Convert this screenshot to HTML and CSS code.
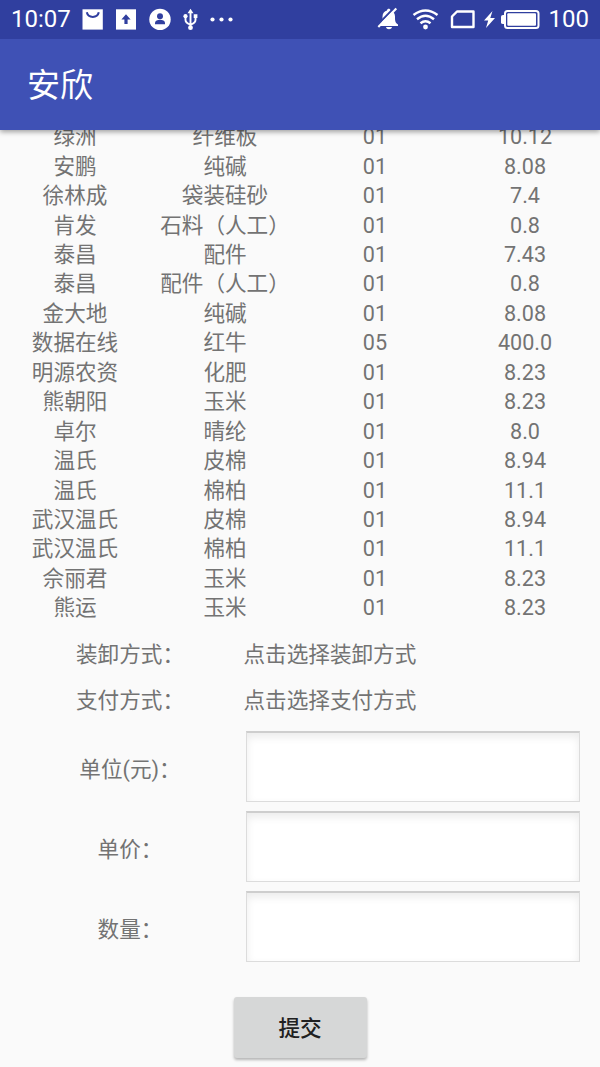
FILE: index.html
```
<!DOCTYPE html>
<html lang="zh-CN">
<head>
<meta charset="utf-8">
<title>安欣</title>
<link rel="stylesheet" href="styles.css">
</head>
<body>
<div class="screen">
  <header class="top">
    <div class="status">
      <span class="clock">10:07</span>
      <svg class="status-icons" width="154" height="38" viewBox="0 0 154 38">
        <path fill="#fff" d="M.5 8.300h20.300v20.300H.5z"/>
        <path d="M4.800 11.300c1.500 6.200 10.500 6.200 12 0" fill="none" stroke="#303f9f" stroke-width="2.100"/>
        <path fill="#fff" d="M34 8.300h20v20.300H34z"/>
        <path fill="#303f9f" d="M44 13.300l4.600 5.200H45.600v4.500h-3.200v-4.500h-3z"/>
        <circle cx="78" cy="18.400" r="10.700" fill="#fff"/>
        <circle cx="78" cy="15.200" r="3" fill="#303f9f"/>
        <path fill="#303f9f" d="M73 23.300v-1.500c0-4 10-4 10 0v1.500z"/>
        <g fill="none" stroke="#fff" stroke-width="1.900"><path d="M108.500 11v16M103.500 16v3q0 3 5 4.500M113.500 15v4q0 3-5 4.500"/></g>
        <path fill="#fff" d="M108.500 7.800l3 4.500h-6zM111.700 13.300h3.700v3.700h-3.700z"/>
        <circle cx="103.500" cy="15.200" r="2.100" fill="#fff"/><circle cx="108.500" cy="26.700" r="2.400" fill="#fff"/>
        <g fill="#fff"><circle cx="130.500" cy="18.500" r="2.100"/><circle cx="139.500" cy="18.500" r="2.100"/><circle cx="148.500" cy="18.500" r="2.100"/></g>
      </svg>
      <svg class="status-right" width="168" height="38" viewBox="0 0 168 38">
        <path fill="#fff" d="M3 23.500c2.500-2 2.500-4 2.500-8 0-3.500 2-5.500 4.500-6 0-2.500 3.500-2.500 3.500 0 3 .7 4.500 3 4.500 6 0 4 0 6 3 8V25H3zM9 26h6c-.5 3-5.500 3-6 0z"/>
        <path d="M-.2 24.700L18.300 5.700" stroke="#303f9f" stroke-width="2"/>
        <path d="M1.300 26L19.300 7.500" stroke="#fff" stroke-width="2.100"/>
        <g fill="none" stroke="#fff" stroke-width="2.500"><path d="M36.500 14q12-9 24 0M40 18.200q8.500-7 17 0M43.500 22.300q5-4 10 0"/></g>
        <circle cx="48.500" cy="26" r="2.400" fill="#fff"/>
        <path d="M80 10.500h16.500V26H75V15.500z" fill="none" stroke="#fff" stroke-width="2.400" stroke-linejoin="round"/>
        <path fill="#fff" d="M115.500 10l-8.500 9.500h4.200l-2.200 7.500 9-10h-4.700z"/>
        <path fill="#fff" d="M128 14h-2q-2 0-2 1.500v6q0 1.500 2 1.500h2z"/>
        <rect x="128" y="10" width="33.500" height="17" rx="2.500" fill="none" stroke="#fff" stroke-width="2"/>
        <rect x="130.300" y="12.300" width="28.700" height="12.400" rx="1" fill="#fff"/>
      </svg>
      <span class="percent">100</span>
    </div>
    <h1 class="title">安欣</h1>
  </header>
  <main>
    <div class="list">
      <span>绿洲</span><span>纤维板</span><span>01</span><span>10.12</span>
      <span>安鹏</span><span>纯碱</span><span>01</span><span>8.08</span>
      <span>徐林成</span><span>袋装硅砂</span><span>01</span><span>7.4</span>
      <span>肯发</span><span>石料（人工）</span><span>01</span><span>0.8</span>
      <span>泰昌</span><span>配件</span><span>01</span><span>7.43</span>
      <span>泰昌</span><span>配件（人工）</span><span>01</span><span>0.8</span>
      <span>金大地</span><span>纯碱</span><span>01</span><span>8.08</span>
      <span>数据在线</span><span>红牛</span><span>05</span><span>400.0</span>
      <span>明源农资</span><span>化肥</span><span>01</span><span>8.23</span>
      <span>熊朝阳</span><span>玉米</span><span>01</span><span>8.23</span>
      <span>卓尔</span><span>晴纶</span><span>01</span><span>8.0</span>
      <span>温氏</span><span>皮棉</span><span>01</span><span>8.94</span>
      <span>温氏</span><span>棉柏</span><span>01</span><span>11.1</span>
      <span>武汉温氏</span><span>皮棉</span><span>01</span><span>8.94</span>
      <span>武汉温氏</span><span>棉柏</span><span>01</span><span>11.1</span>
      <span>佘丽君</span><span>玉米</span><span>01</span><span>8.23</span>
      <span>熊运</span><span>玉米</span><span>01</span><span>8.23</span>
    </div>
    <form class="form">
      <div class="row choice"><label>装卸方式：</label><span>点击选择装卸方式</span></div>
      <div class="row choice"><label>支付方式：</label><span>点击选择支付方式</span></div>
      <div class="row entry first"><label for="unit">单位(元)：</label><input id="unit" class="field"></div>
      <div class="row entry"><label for="price">单价：</label><input id="price" class="field"></div>
      <div class="row entry"><label for="count">数量：</label><input id="count" class="field"></div>
      <button type="button" class="submit">提交</button>
    </form>
  </main>
</div>
</body>
</html>
```
FILE: styles.css
```
* { box-sizing: border-box; }
body {
  margin: 0;
  background: #fafafa;
  color: #737373;
  font-family: Roboto, "Noto Sans CJK SC", sans-serif;
  font-size: 21.6px;
}
.screen { height: 1067px; overflow: hidden; display: flex; flex-direction: column; }
.top {
  flex: none;
  height: 130px;
  position: relative;
  z-index: 1;
  background: #3f51b5;
  color: #fff;
  box-shadow: 0 2px 5px rgba(0, 0, 0, .36);
}
.status {
  height: 39px;
  padding: 0 11px;
  display: flex;
  align-items: center;
  background: #303f9f;
  font-size: 24px;
  line-height: 36px;
}
.clock, .percent { height: 38px; }
.clock { width: 71px; }
.status-right { margin-left: 141px; }
.percent { margin-left: 4px; }
.status svg { flex: none; }
.title {
  margin: 0;
  padding-left: 27px;
  font-size: 33px;
  font-weight: 400;
  line-height: 93px;
}
.list {
  height: 500.65px;
  margin-top: -7.75px;
  display: grid;
  grid-template-columns: repeat(4, 150px);
  grid-auto-rows: 29.45px;
  line-height: 29.45px;
  text-align: center;
  white-space: nowrap;
}
.form { display: flex; flex-direction: column; padding: 7.1px 20px 0 16px; }
.row { display: grid; grid-template-columns: 230px 1fr; align-items: center; }
.row label { padding-right: 2px; text-align: center; }
.choice { height: 46px; }
.choice span { margin-left: -2.5px; }
.entry { height: 70px; margin-top: 10px; }
.entry label { padding-top: 2px; }
.first { margin-top: 9px; }
.field {
  width: 334px;
  height: 71px;
  padding: 0 10px;
  border: 1px solid #dcdcdc;
  border-top: 2px solid #cecece;
  border-radius: 0;
  outline: 0;
  background: #fff;
  box-shadow: inset 0 4px 8px rgba(0, 0, 0, .08);
  font: inherit;
}
.submit {
  align-self: center;
  width: 133px;
  height: 61px;
  margin: 36px 0 0 4px;
  padding: 0 0 2px;
  border: 0;
  border-radius: 3px;
  background: #d6d7d7;
  box-shadow: 0 2px 3px rgba(0, 0, 0, .28);
  color: #202020;
  font: 500 21.6px Roboto, "Noto Sans CJK SC", sans-serif;
}
```
